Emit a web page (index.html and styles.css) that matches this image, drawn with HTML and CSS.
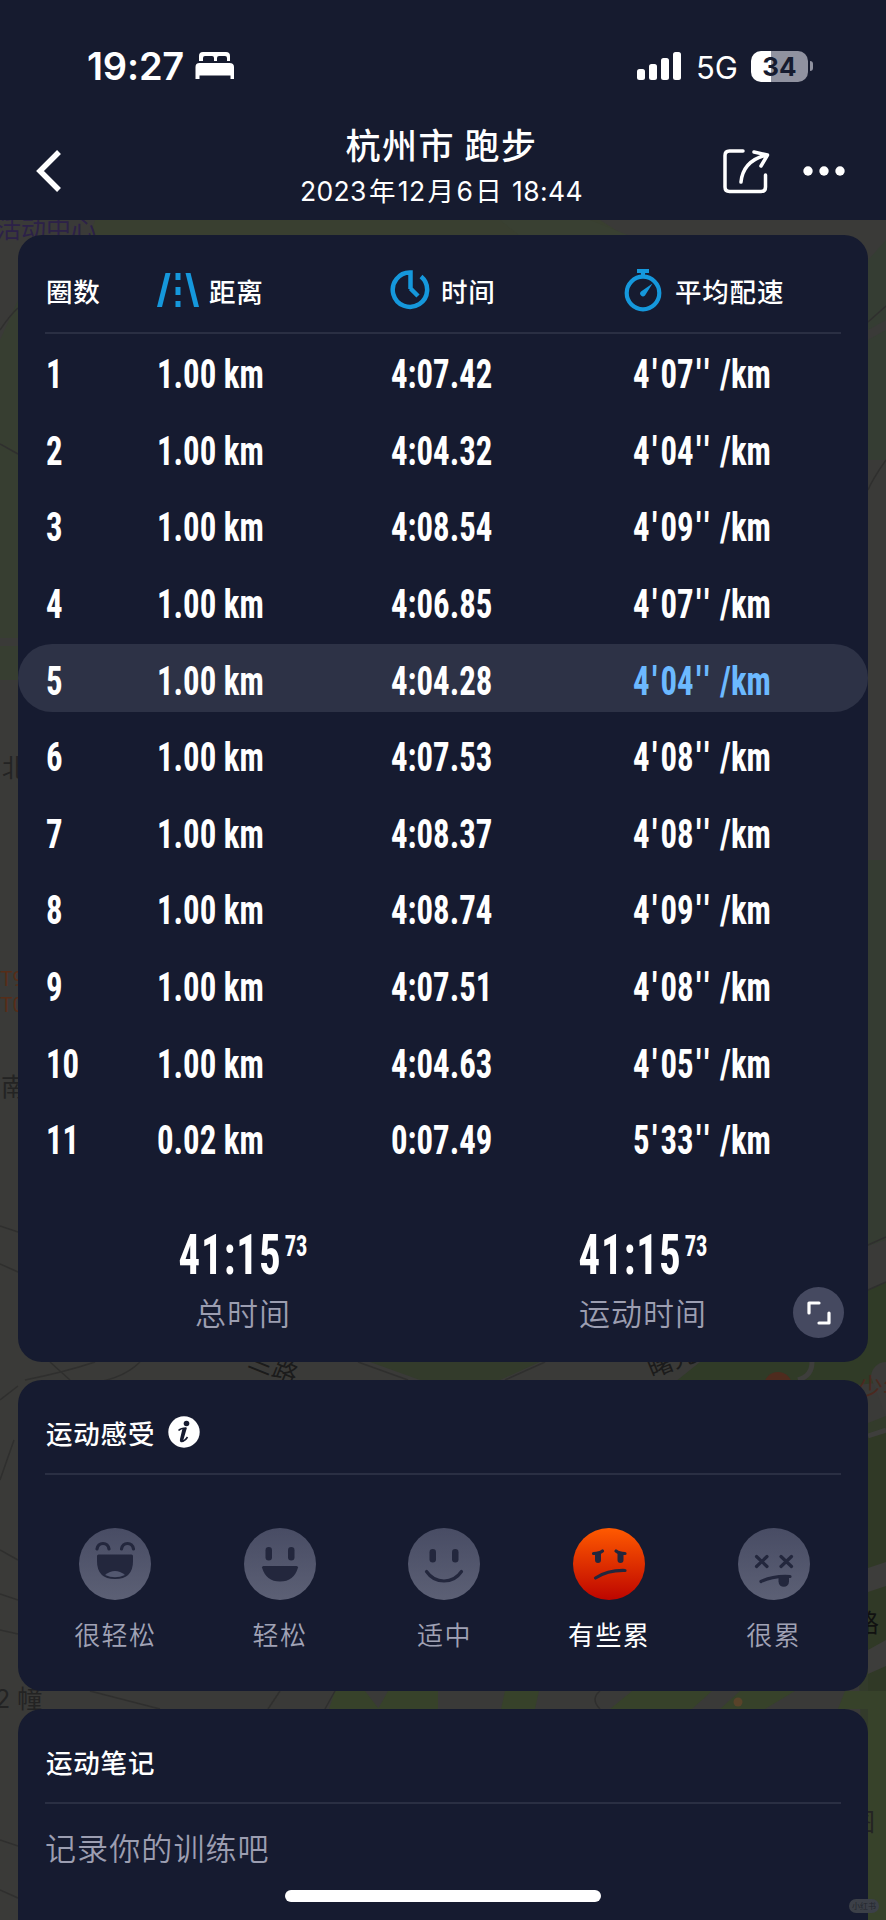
FILE: index.html
```
<!DOCTYPE html>
<html lang="zh-CN">
<head>
    <meta charset="UTF-8">
    <meta name="viewport" content="width=device-width, initial-scale=1.0">
    <title>杭州市 跑步</title>
    <link rel="stylesheet" href="styles.css">
</head>
<body>
    <!-- dimmed map behind the cards -->
    <svg class="map" viewBox="0 0 886 1920" width="886" height="1920">
        <rect width="886" height="1920" fill="#3a3a38"/>
        <path d="M95 220H600L625 236H90z" fill="#393f30"/>
        <path d="M500 220h90l40 16H520z" fill="#394032"/>
        <path d="M0 340L18 300V638H0zM0 646h18v34H0z" fill="#373e31"/>
        <path d="M886 240v80l-18 10v-70zM868 340l18-10v130h-18z" fill="#353d33"/>
        <path d="M868 860h18V1240l-18 6z" fill="#353c32"/>
        <path d="M868 1290l18-8v100l-40 4H670l30-24h130z" fill="#303b27"/>
        <path d="M370 1362h170l-40 18H420zM850 1430l36-14v300l-18 120h18v84h-18z" fill="#333b2b"/>
        <path d="M868 1438l18-6v480h-18z" fill="#303926"/>
        <path d="M868 1568l18-6v24l-18 6zM868 1650l18-10v26l-18 8zM868 1716q8 0 8 10t-8 16z" fill="#3d3d3b"/>
        <path d="M335 1691h30l14 18h-50zM388 1691h50v18h-60zM505 1691h34l-4 18h-34zM610 1709l22-18h80l-20 18zM720 1709l20-18h55l-30 18zM845 1691h41v240h-18V1709h-30z" fill="#37422a"/>
        <path d="M0 1226l18 6M0 1264l18 8M0 330q10-15 18-22M0 444l18 10M50 1362l20 18M95 1362q-30 10-70 18M140 1362q-20 20-60 22M358 1362l50 18M505 1380l40-18M600 1362M0 1400l18-14M0 1480l14-40M0 1550l18 10M0 1594l18 6M0 1630l18 4M90 1691l70 18M268 1709l12-18M325 1709l10-18M600 1691q-10 8 0 18M868 322l18-16M868 1245l18-8M0 1840l18 6M0 1890l18 8M886 460q-14 20-18 30M868 1290l18-8" stroke="#2f2f2e" stroke-width="1.5" fill="none"/>
        <path d="M812 1362q0 14-14 18M868 1436l18-6" stroke="#3e3e3c" stroke-width="5" fill="none"/>
        <path d="M886 1362a15 15 0 0 0-15 15l15 40z" fill="#3c3b39"/>
        <circle cx="778" cy="1386" r="14" fill="#4e2b1e"/>
        <circle cx="738" cy="1702" r="4.500" fill="#59432a"/>
        <g class="map-label">
            <text x="-4" y="238" fill="#2c2148">活动中心</text>
            <text x="2" y="777">北</text>
            <text x="0" y="986" class="poi">T9</text>
            <text x="0" y="1012" class="poi">T0</text>
            <text x="1" y="1096">南</text>
            <text x="247" y="1366" transform="rotate(22 247 1366)" fill="#1b1b1b">兰路</text>
            <text x="652" y="1378" transform="rotate(-22 652 1378)" fill="#1b1b1b">曙光</text>
            <text x="858" y="1396" fill="#4b291f">少年</text>
            <text x="-5" y="1708">2 幢</text>
            <text x="854" y="1632" fill="#111">路</text>
            <text x="850" y="1831">图</text>
        </g>
    </svg>

    <header class="header">
        <div class="status-bar">
            <div class="status-left">
                <span class="clock">19:27</span>
                <svg width="40" height="28" viewBox="0 0 40 28" fill="#fff">
                    <path d="M4 9V4q0-4 4-4h23q4 0 4 4v5h-3V6q0-2-2-2h-6q-2 0-2 2v3h-3V6q0-2-2-2H10q-2 0-2 2v3z"/>
                    <path d="M.500 27V15q0-4 4-4h30q4.500 0 4.500 4v12h-3.500v-3.500h-31V27z"/>
                </svg>
            </div>
            <div class="status-right">
                <svg width="45" height="28" viewBox="0 0 45 28" fill="#fff">
                    <rect x="0" y="17" width="8" height="11" rx="2.500"/>
                    <rect x="12" y="12" width="8" height="16" rx="2.500"/>
                    <rect x="24" y="6" width="8" height="22" rx="2.500"/>
                    <rect x="36" y="0" width="8" height="28" rx="2.500"/>
                </svg>
                <span class="network">5G</span>
                <div class="battery">34</div>
                <div class="battery-tip"></div>
            </div>
        </div>
        <div class="nav-bar">
            <svg width="32" height="46" viewBox="0 0 32 46" fill="none" stroke="#fff" stroke-width="5.500">
                <path d="M26 4L7 23L26 42"/>
            </svg>
            <div class="heading">
                <div class="title">杭州市 跑步</div>
                <div class="date">2023<b>年</b>12<b>月</b>6<b>日</b> 18:44</div>
            </div>
            <div class="actions">
                <svg width="50" height="50" viewBox="0 0 50 50" fill="none" stroke="#fff" stroke-width="3.500" stroke-linecap="round">
                    <path d="M22 5H8.500Q4 5 4 9.500V41q0 4.500 4.500 4.500H40q4.500 0 4.500-4.500V29"/>
                    <path d="M20 36Q22 15 45 9M33 6l13.500 3L40 20" stroke-linejoin="round"/>
                </svg>
                <svg width="42" height="10" viewBox="0 0 42 10" fill="#fff">
                    <circle cx="5" cy="5" r="4.700"/><circle cx="21" cy="5" r="4.700"/><circle cx="37" cy="5" r="4.700"/>
                </svg>
            </div>
        </div>
    </header>

    <main class="cards">
        <section class="card laps-card">
            <div class="lap-row lap-head">
                <div>圈数</div>
                <div>
                    <svg width="42" height="34" viewBox="0 0 42 34" fill="#1598dc">
                        <path d="M8.500 0h5L5 34H0zM28.500 0h5L42 34h-5zM18.500 0h5v7h-5zM18.500 14h5v8h-5zM18.500 28h5v6h-5z"/>
                    </svg>距离
                </div>
                <div class="head-time">
                    <svg width="40" height="40" viewBox="0 0 40 40" fill="none" stroke="#1598dc" stroke-width="4.500">
                        <path d="M20.500 19V2.500A17.200 17.200 0 1 0 31 6.500M20.500 18.500l7.500 7.500"/>
                    </svg>时间
                </div>
                <div class="head-pace">
                    <svg width="38" height="44" viewBox="0 0 38 44" fill="none" stroke="#1598dc" stroke-width="4.200">
                        <circle cx="19" cy="25" r="16.300"/>
                        <path d="M13 3h12M19 3v6" />
                        <path d="M28.500 15.500L21 27.500a2.600 2.600 0 0 1-4-4z" fill="#1598dc" stroke="none"/>
                    </svg>平均配速
                </div>
            </div>
            <div id="laps"></div>
            <div class="totals">
                <div class="total">
                    <div class="total-time">41:15<sup>73</sup></div>
                    <div class="total-label">总时间</div>
                </div>
                <div class="total">
                    <div class="total-time">41:15<sup>73</sup></div>
                    <div class="total-label">运动时间</div>
                </div>
            </div>
            <div class="expand">
                <svg width="24" height="24" viewBox="0 0 24 24" fill="none" stroke="#fff" stroke-width="3.200" stroke-linecap="round" stroke-linejoin="round">
                    <path d="M2 12V2h10M22 12v10H12"/>
                </svg>
            </div>
        </section>

        <section class="card feel-card">
            <div class="card-title">运动感受
                <svg width="32" height="32" viewBox="0 0 32 32">
                    <circle cx="16" cy="16" r="15.700" fill="#fff"/>
                    <circle cx="18.500" cy="7.500" r="2.800" fill="#161b30"/>
                    <path d="M10.500 14.500Q13 12 18 12M14 25q3 0 5.500-4" fill="none" stroke="#161b30" stroke-width="1.600"/>
                    <path d="M14.500 12.500l4.500-1-3.500 12q-.5 2 1 1.500-2 2-4 1-1-.8-.5-3z" fill="#161b30"/>
                </svg>
            </div>
            <div class="feelings">
                <div class="feeling">
                    <svg viewBox="0 0 72 72" class="face">
                        <circle cx="36" cy="36" r="36" fill="url(#grey)"/>
                        <path d="M18 21q1-5.500 6-5.500t6 5.500M42.500 21q1-5.500 6-5.500t6 5.500" class="line"/>
                        <path d="M19.500 26.500h33q1.500 0 1.500 1.500v5q0 18-18 18T18 33v-5q0-1.500 1.500-1.500z" class="dark"/>
                        <path d="M26 47q10-8 20 0-10 4.500-20 0z" fill="#535870"/>
                    </svg>
                    <span>很轻松</span>
                </div>
                <div class="feeling">
                    <svg viewBox="0 0 72 72" class="face">
                        <circle cx="36" cy="36" r="36" fill="url(#grey)"/>
                        <rect x="21.500" y="19" width="6.500" height="13.500" rx="3.250" class="dark"/>
                        <rect x="44" y="19" width="6.500" height="13.500" rx="3.250" class="dark"/>
                        <path d="M19.500 38h33q1.500 0 1.500 1.500Q50 53.500 36 53.500T18 39.500q0-1.500 1.500-1.500z" class="dark"/>
                    </svg>
                    <span>轻松</span>
                </div>
                <div class="feeling">
                    <svg viewBox="0 0 72 72" class="face">
                        <circle cx="36" cy="36" r="36" fill="url(#grey)"/>
                        <rect x="21.500" y="21" width="6.500" height="13.500" rx="3.250" class="dark"/>
                        <rect x="44" y="21" width="6.500" height="13.500" rx="3.250" class="dark"/>
                        <path d="M18.500 43.500Q25 53 36 53t17.500-9.500" class="line"/>
                    </svg>
                    <span>适中</span>
                </div>
                <div class="feeling selected">
                    <svg viewBox="0 0 72 72" class="face">
                        <circle cx="36" cy="36" r="36" fill="url(#red)"/>
                        <path d="M20.500 25.500q6 0 9-2.500M52 25.500q-6 0-9-2.500" class="line"/>
                        <path d="M22 25l6-1v8a3 3 0 0 1-6 0zM50.500 25l-6-1v8a3 3 0 0 0 6 0z" class="dark"/>
                        <path d="M22.500 50Q35 42 52 42.500" class="line"/>
                    </svg>
                    <span>有些累</span>
                </div>
                <div class="feeling">
                    <svg viewBox="0 0 72 72" class="face">
                        <circle cx="36" cy="36" r="36" fill="url(#grey)"/>
                        <path d="M18.500 28.500l10.500 10m0-10l-10.500 10M43 28.500l10.500 10m0-10L43 38.500M23 53.500q12-6 29-5" class="line"/>
                        <path d="M40.500 48H51v5.500a5.200 5.200 0 0 1-10.500 0z" class="dark"/>
                    </svg>
                    <span>很累</span>
                </div>
            </div>
        </section>

        <section class="card note-card">
            <div class="card-title">运动笔记</div>
            <div class="note">记录你的训练吧</div>
        </section>
    </main>

    <div class="home-indicator"></div>
    <div class="watermark">小红书</div>

    <svg width="0" height="0" class="defs">
        <linearGradient id="grey" x1="0" y1="0" x2="0" y2="1">
            <stop offset="0" stop-color="#484c64"/>
            <stop offset="1" stop-color="#5c6075"/>
        </linearGradient>
        <linearGradient id="red" x1="0" y1="0" x2="0" y2="1">
            <stop offset="0" stop-color="#ff5a00"/>
            <stop offset="1" stop-color="#bd0500"/>
        </linearGradient>
    </svg>

    <script>
        const laps = [
            ['1.00', '4:07.42', '4', '07'],
            ['1.00', '4:04.32', '4', '04'],
            ['1.00', '4:08.54', '4', '09'],
            ['1.00', '4:06.85', '4', '07'],
            ['1.00', '4:04.28', '4', '04'],
            ['1.00', '4:07.53', '4', '08'],
            ['1.00', '4:08.37', '4', '08'],
            ['1.00', '4:08.74', '4', '09'],
            ['1.00', '4:07.51', '4', '08'],
            ['1.00', '4:04.63', '4', '05'],
            ['0.02', '0:07.49', '5', '33']
        ];
        const fastest = 4;

        document.getElementById('laps').innerHTML = laps.map((lap, i) => `
            <div class="lap-row${i === fastest ? ' fastest' : ''}">
                <div><span class="num">${i + 1}</span></div>
                <div><span class="num">${lap[0]} km</span></div>
                <div><span class="num">${lap[1]}</span></div>
                <div class="pace"><span class="num">${lap[2]}<i>'</i>${lap[3]}<i>''</i> /km</span></div>
            </div>`).join('');
    </script>
</body>
</html>
```
FILE: styles.css
```
* {
    box-sizing: border-box;
}

body {
    margin: 0;
    width: 886px;
    height: 1920px;
    overflow: hidden;
    position: relative;
    background: #3a3a38;
    color: #fff;
    font-family: Inter, "Noto Sans CJK SC", sans-serif;
}

svg {
    display: block;
    flex: none;
}

.map {
    position: absolute;
    top: 0;
    left: 0;
}

.map-label {
    font-size: 25px;
    fill: #232323;
}

.map-label .poi {
    font-family: Roboto, sans-serif;
    font-size: 21px;
    fill: #572d18;
}

.defs {
    position: absolute;
}

/* header */
.header {
    position: relative;
    height: 220px;
    background: #161b2f;
}

.status-bar {
    height: 132px;
    padding: 0 73px 0 87px;
    display: flex;
    justify-content: space-between;
    align-items: center;
}

.status-left, .status-right {
    display: flex;
    align-items: center;
}

.clock {
    font-size: 38px;
    font-weight: 600;
    width: 108px;
    letter-spacing: -0.2px;
    white-space: nowrap;
}

.network {
    font-size: 31px;
    margin: 2px 0 0 14px;
    width: 55px;
}

.battery {
    width: 57px;
    height: 31px;
    border-radius: 10px;
    background: linear-gradient(90deg, #fff 35%, #9092a0 35%);
    color: #161b2f;
    font-size: 26px;
    font-weight: 700;
    line-height: 31px;
    text-align: center;
}

.battery-tip {
    width: 3px;
    height: 10px;
    margin-left: 2px;
    border-radius: 0 4px 4px 0;
    background: #9092a0;
}

.nav-bar {
    height: 88px;
    margin-top: -5px;
    padding: 0 41px 0 33px;
    display: flex;
    justify-content: space-between;
    align-items: center;
}

.heading {
    margin-left: 97px;
    margin-top: -4px;
    text-align: center;
    white-space: nowrap;
}

.title {
    font-family: "Noto Sans CJK SC", sans-serif;
    font-size: 35px;
    font-weight: 500;
    line-height: 44px;
    letter-spacing: 1.5px;
}

.date {
    font-size: 26.5px;
    line-height: 50px;
    letter-spacing: 0.4px;
}

.date b {
    font-weight: 400;
    margin: 0 2px;
}

.actions {
    display: flex;
    align-items: center;
    gap: 32px;
}

/* cards */
.cards {
    position: relative;
    display: flex;
    flex-direction: column;
    gap: 18px;
    padding: 15px 18px 0;
}

.card {
    position: relative;
    border-radius: 24px;
    background: #161b30;
}

.laps-card {
    height: 1127px;
}

.lap-row {
    display: grid;
    grid-template-columns: 111px 234px 233px 1fr;
    align-items: center;
    height: 76.6px;
    padding-left: 28px;
    position: relative;
}

.lap-row > div {
    display: flex;
    align-items: center;
    white-space: nowrap;
}

.lap-head {
    height: 99px;
    margin: 0 27px;
    padding: 13px 0 0 1px;
    border-bottom: 2px solid #2a2f43;
    font-family: "Noto Sans CJK SC", sans-serif;
    font-size: 26.5px;
    font-weight: 500;
    letter-spacing: 0.8px;
}

.lap-head svg {
    margin-right: 10px;
}

.lap-head .head-time svg {
    margin: 0 11px 0 -1px;
}

.lap-head .head-pace svg {
    margin-right: 13px;
}

.pace {
    padding-left: 9px;
}

.num {
    font-family: "Roboto Condensed", Roboto, sans-serif;
    font-size: 41px;
    font-weight: 700;
    line-height: 48px;
    padding-top: 4px;
    transform: scaleX(0.8);
    transform-origin: left;
}

.num i {
    font-style: normal;
    letter-spacing: 4px;
    margin-left: 3px;
}

.fastest::before {
    content: "";
    position: absolute;
    left: 0;
    right: 0;
    top: 4px;
    height: 68px;
    border-radius: 34px;
    background: #2d3246;
}

.fastest > div {
    position: relative;
}

.fastest .pace {
    color: #6cb9ff;
}

.totals {
    display: flex;
    margin-top: 44px;
    padding: 0 25px;
}

.total {
    flex: 1;
    text-align: center;
}

.total-time {
    font-family: "Roboto Condensed", Roboto, sans-serif;
    font-size: 55px;
    font-weight: 700;
    line-height: 68px;
    letter-spacing: 1.2px;
    transform: scaleX(0.78);
}

.total-time sup {
    font-size: 29px;
    line-height: 0;
    vertical-align: 18px;
    margin-left: 4px;
    letter-spacing: 0;
}

.total-label {
    margin-top: -1px;
    font-family: "Noto Sans CJK SC", sans-serif;
    font-size: 31px;
    font-weight: 350;
    line-height: 48px;
    letter-spacing: 1px;
    color: #9c9eb1;
}

.expand {
    position: absolute;
    right: 24px;
    bottom: 24px;
    width: 51px;
    height: 51px;
    border-radius: 50%;
    background: #454960;
    display: flex;
    align-items: center;
    justify-content: center;
}

.feel-card {
    height: 311px;
}

.card-title {
    display: flex;
    align-items: center;
    gap: 13px;
    height: 95px;
    margin: 0 27px;
    padding-left: 1px;
    padding-top: 11px;
    border-bottom: 2px solid #2a2f43;
    font-family: "Noto Sans CJK SC", sans-serif;
    font-size: 26.5px;
    font-weight: 500;
    letter-spacing: 0.8px;
}

.feelings {
    display: grid;
    grid-template-columns: repeat(5, 1fr);
    padding: 53px 12px 0 15px;
}

.feeling {
    display: flex;
    flex-direction: column;
    align-items: center;
    font-family: "Noto Sans CJK SC", sans-serif;
    font-size: 26px;
    font-weight: 350;
    letter-spacing: 1.4px;
    color: #a0a2b5;
}

.feeling span {
    margin-top: 14px;
    line-height: 40px;
}

.selected {
    color: #fff;
    font-weight: 400;
}

.face {
    width: 72px;
    height: 72px;
}

.face .dark {
    fill: #23273d;
}

.face .line {
    fill: none;
    stroke: #23273d;
    stroke-width: 3.2;
    stroke-linecap: round;
}

.note-card {
    height: 240px;
}

.note {
    padding: 19px 27px;
    font-family: "Noto Sans CJK SC", sans-serif;
    font-size: 31px;
    font-weight: 350;
    line-height: 48px;
    letter-spacing: 1.1px;
    color: #9c9eb1;
}

.home-indicator {
    position: absolute;
    left: 285px;
    bottom: 18px;
    width: 316px;
    height: 12px;
    border-radius: 6px;
    background: #fff;
}

.watermark {
    position: absolute;
    right: 7px;
    bottom: 7px;
    width: 30px;
    height: 14px;
    border-radius: 7px;
    background: #3c4048;
    color: #23262d;
    font-size: 8px;
    line-height: 14px;
    text-align: center;
}
```
